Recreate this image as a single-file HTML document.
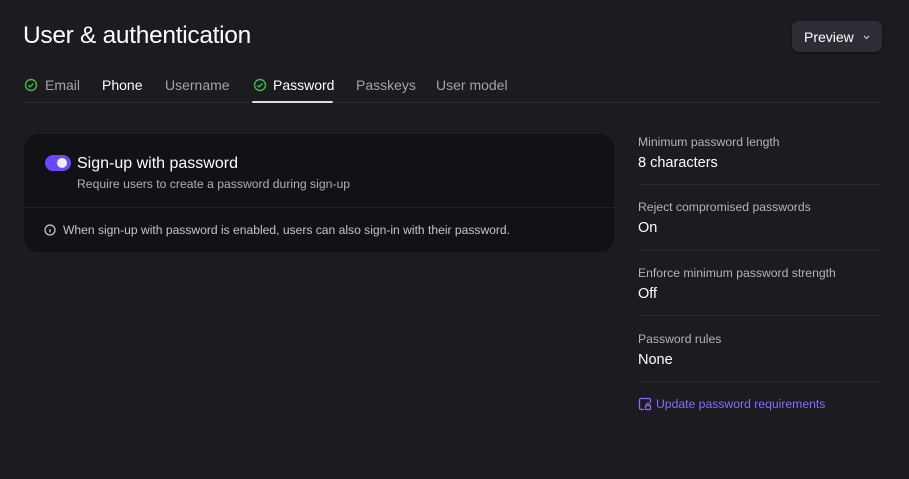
<!DOCTYPE html>
<html><head><style>
body{margin:0;width:909px;height:479px;background:#1c1b20;font-family:"Liberation Sans",sans-serif;color:#fff;position:relative;overflow:hidden}
.a{position:absolute;white-space:nowrap}
h1{position:absolute;left:23px;top:22px;margin:0;font-size:24.5px;font-weight:400;letter-spacing:-0.3px}
.btn{position:absolute;left:792px;top:21px;width:90px;height:31px;background:#2d2d35;border-radius:7px;box-shadow:0 1px 2px rgba(0,0,0,.5)}
.tab{position:absolute;top:77px;font-size:14px;color:#a3a3ab}
.line{position:absolute;background:#2a2a30;height:1px}
.card{position:absolute;left:24px;top:134px;width:590px;height:118px;background:#121115;border-radius:14px}
.lab{position:absolute;left:638px;font-size:12.2px;color:#b3b3ba}
.val{position:absolute;left:638px;font-size:14.5px;color:#fff}
</style></head><body>
<h1>User &amp; authentication</h1>
<div class="btn"><span class="a" style="left:12px;top:8px;font-size:14px">Preview</span>
<svg class="a" style="left:70px;top:12px" width="9" height="8" viewBox="0 0 9 8"><path d="M2 3l2.5 2.5L7 3" stroke="#bbb" fill="none" stroke-width="1.3"/></svg></div>

<svg class="a" style="left:24px;top:78px" width="14" height="14" viewBox="0 0 14 14"><circle cx="7" cy="7" r="5.5" stroke="#3fb950" fill="none" stroke-width="1.4"/><path d="M4.5 7.2l1.7 1.6 3.2-3.3" stroke="#3fb950" fill="none" stroke-width="1.4"/></svg>
<span class="tab" style="left:45px">Email</span>
<span class="tab" style="left:102px;color:#fff">Phone</span>
<span class="tab" style="left:165px">Username</span>
<svg class="a" style="left:253px;top:78px" width="14" height="14" viewBox="0 0 14 14"><circle cx="7" cy="7" r="5.5" stroke="#3fb950" fill="none" stroke-width="1.4"/><path d="M4.5 7.2l1.7 1.6 3.2-3.3" stroke="#3fb950" fill="none" stroke-width="1.4"/></svg>
<span class="tab" style="left:273px;color:#fff">Password</span>
<span class="tab" style="left:356px">Passkeys</span>
<span class="tab" style="left:436px">User model</span>
<div class="line" style="left:24px;top:102px;width:858px"></div>
<div class="a" style="left:252px;top:101px;width:81px;height:2px;background:#ddd;border-radius:1px"></div>

<div class="card">
<div class="a" style="left:21px;top:21px;width:26px;height:16px;background:#6c47ff;border-radius:8px"><div class="a" style="left:12px;top:3px;width:10px;height:10px;background:#eee;border-radius:50%"></div></div>
<span class="a" style="left:53px;top:21px;font-size:16px">Sign-up with password</span>
<span class="a" style="left:53px;top:43px;font-size:12.2px;color:#b0b0b8">Require users to create a password during sign-up</span>
<div class="line" style="left:0;top:73px;width:590px;background:#222127"></div>
<svg class="a" style="left:20px;top:90px" width="12" height="12" viewBox="0 0 12 12"><circle cx="6" cy="6" r="5" stroke="#ccc" fill="none" stroke-width="1.2"/><path d="M6 5.3v3M6 3.5v.3" stroke="#ccc" stroke-width="1.3"/></svg>
<span class="a" style="left:39px;top:89px;font-size:12.1px;color:#c4c4cc">When sign-up with password is enabled, users can also sign-in with their password.</span>
</div>

<span class="lab" style="top:135px">Minimum password length</span>
<span class="val" style="top:155px">8 characters</span>
<div class="line" style="left:638px;top:184px;width:242px"></div>
<span class="lab" style="top:200px">Reject compromised passwords</span>
<span class="val" style="top:220px">On</span>
<div class="line" style="left:638px;top:250px;width:242px"></div>
<span class="lab" style="top:266px">Enforce minimum password strength</span>
<span class="val" style="top:286px">Off</span>
<div class="line" style="left:638px;top:315px;width:242px"></div>
<span class="lab" style="top:332px">Password rules</span>
<span class="val" style="top:352px">None</span>
<div class="line" style="left:638px;top:381px;width:242px"></div>
<svg class="a" style="left:638px;top:397px" width="14" height="14" viewBox="0 0 14 14"><path d="M6 12.5H3a1.5 1.5 0 0 1-1.5-1.5V3A1.5 1.5 0 0 1 3 1.5h8A1.5 1.5 0 0 1 12.5 3v3" stroke="#8b6cff" fill="none" stroke-width="1.3"/><rect x="7.5" y="8.5" width="5" height="4" rx=".8" stroke="#8b6cff" fill="none" stroke-width="1.2"/><path d="M8.7 8.5V7.5a1.3 1.3 0 0 1 2.6 0v1" stroke="#8b6cff" fill="none" stroke-width="1.1"/></svg>
<span class="a" style="left:656px;top:397px;font-size:12.2px;color:#8b6cff">Update password requirements</span>
</body></html>
